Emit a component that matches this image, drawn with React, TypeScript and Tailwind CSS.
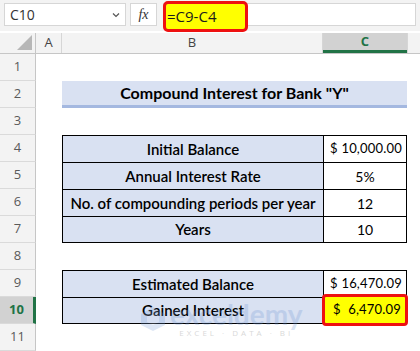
import React from "react";

const rows = [1, 2, 3, 4, 5, 6, 7, 8, 9, 10, 11];

const cellFont = { fontFamily: "Lato, 'Noto Sans', sans-serif" };
const uiFont = { fontFamily: "'Open Sans', 'Noto Sans', sans-serif" };

const Money = ({ value }: { value: string }) => (
  <div className="flex h-full w-full items-center justify-between pl-[6px] pr-[4px] text-[13px] tracking-[0.2px]">
    <span>$</span>
    <span>{value}</span>
  </div>
);

const renderRow = (n: number) => {
  const tbl1 = n >= 4 && n <= 7;
  const tbl2 = n === 9 || n === 10;
  const labels: Record<number, string> = {
    4: "Initial Balance",
    5: "Annual Interest Rate",
    6: "No. of compounding periods per year",
    7: "Years",
    9: "Estimated Balance",
    10: "Gained Interest",
  };
  const lastRow = n === 7 || n === 10;

  let b: React.ReactNode = null;
  let c: React.ReactNode = null;

  if (n === 2) {
    b = (
      <div className="flex h-full flex-1 items-center justify-center border-b-[3px] border-[#a4b8e0] bg-[#d9e1f2] text-[16px] font-bold text-black">
        Compound Interest for Bank "Y"
      </div>
    );
  } else if (tbl1 || tbl2) {
    b = (
      <div
        className={`flex h-full w-[261px] items-center justify-center border-l border-t border-black bg-[#d9e1f2] text-[15px] font-semibold text-black ${lastRow ? "border-b" : ""}`}
      >
        {labels[n]}
      </div>
    );
    let inner: React.ReactNode = null;
    if (n === 4) inner = <Money value="10,000.00" />;
    if (n === 5) inner = "5%";
    if (n === 6) inner = "12";
    if (n === 7) inner = "10";
    if (n === 9) inner = <Money value="16,470.09" />;
    if (n === 10) {
      c = (
        <div className="h-full w-[84px] border-b border-l border-t border-black">
          <div className="relative -ml-[2px] -mt-[4px] h-[32px] w-[86px] rounded-[4px] border-[3px] border-[#ee1111] bg-[#ffff00] text-[13px] tracking-[0.2px] text-black">
            <div className="flex h-full items-center justify-between pl-[8px] pr-[4px]">
              <span>$</span>
              <span>6,470.09</span>
            </div>
          </div>
        </div>
      );
    } else {
      c = (
        <div
          className={`flex h-full w-[84px] items-center justify-center border-l border-r border-t border-black bg-white text-[14px] text-black ${lastRow ? "border-b" : ""}`}
        >
          {inner}
        </div>
      );
    }
  }

  const active = n === 10;

  return (
    <div key={n} className="flex h-[27px]">
      <div
        className={`flex h-full w-[36px] shrink-0 items-center justify-center border-b border-[#dadada] text-[13px] ${
          active
            ? "border-r-[3px] border-r-[#217346] bg-[#d2d2d2] font-bold text-[#217346]"
            : "border-r border-r-[#c6c6c6] bg-[#f3f3f3] text-[#5a5a5a]"
        }`}
        style={uiFont}
      >
        {n}
      </div>
      <div className="w-[26px] shrink-0" />
      {n === 2 ? (
        <div className="flex h-full w-[345px]" style={cellFont}>
          {b}
        </div>
      ) : (
        <div className="flex h-full" style={cellFont}>
          {b}
          {c}
        </div>
      )}
    </div>
  );
};

export default function App() {
  return (
    <div className="relative h-[351px] w-[420px] overflow-hidden bg-white" style={uiFont}>
      {/* formula bar */}
      <div className="flex h-[31px] items-start gap-[4px] bg-[#f3f3f3] px-[4px] pt-[3px]">
        <div className="flex h-[23px] w-[122px] items-center justify-between border border-[#d6d6d6] bg-white px-[5px] text-[14px] text-[#333]">
          <span>C10</span>
          <svg width="8" height="6" viewBox="0 0 8 6">
            <path d="M1 1.5 L4 4.5 L7 1.5" fill="none" stroke="#555" strokeWidth="1.2" />
          </svg>
        </div>
        <div
          className="flex h-[23px] w-[27px] items-center justify-center border border-[#d6d6d6] bg-white text-[14px] italic text-[#333]"
          style={{ fontFamily: "'Liberation Serif', serif" }}
        >
          fx
        </div>
        <div className="ml-[2px] h-[23px] flex-1 border border-[#d6d6d6] bg-white" />
      </div>
      <div className="absolute left-[163px] top-[1px] flex h-[31px] w-[85px] items-center rounded-[5px] border-[3px] border-[#ee1111] bg-[#ffff00] pl-[1px] text-[15px] text-[#1c1c1c]">
        =C9-C4
      </div>

      {/* column headers */}
      <div className="mt-[2px] flex h-[21px] border-b border-[#c6c6c6] bg-[#f3f3f3] text-[13px] text-[#444]">
        <div className="relative w-[36px] shrink-0 border-r border-[#c6c6c6]">
          <svg className="absolute bottom-[3px] right-[3px]" width="15" height="15" viewBox="0 0 15 15">
            <path d="M15 0 L15 15 L0 15 Z" fill="#b7b7b7" />
          </svg>
        </div>
        <div className="flex w-[26px] shrink-0 items-center justify-center border-r border-[#d6d6d6]">A</div>
        <div className="flex w-[261px] shrink-0 items-center justify-center border-r border-[#d6d6d6]">B</div>
        <div className="flex w-[84px] shrink-0 items-center justify-center border-b-[3px] border-b-[#217346] bg-[#d2d2d2] font-bold text-[#217346]">
          C
        </div>
        <div className="flex-1 border-l border-[#d6d6d6]" />
      </div>

      {rows.map((n) => renderRow(n))}

      {/* watermark */}
      <div className="pointer-events-none absolute left-[140px] top-[300px] flex items-center gap-[4px] opacity-25">
        <svg width="26" height="26" viewBox="0 0 26 26">
          <path d="M13 1 L25 8 L25 19 L13 25 L1 19 L1 8 Z" fill="#7a9fd8" />
          <path d="M13 7 L19 10.5 L19 16 L13 19 L7 16 L7 10.5 Z" fill="#cfdcf2" />
        </svg>
        <div className="flex flex-col items-center leading-none">
          <span className="text-[28px] font-bold text-[#6d93d2]" style={{ fontFamily: "Lato, sans-serif" }}>
            exceldemy
          </span>
          <span className="mt-[1px] text-[8px] tracking-[3px] text-[#666]">EXCEL · DATA · BI</span>
        </div>
      </div>
    </div>
  );
}
